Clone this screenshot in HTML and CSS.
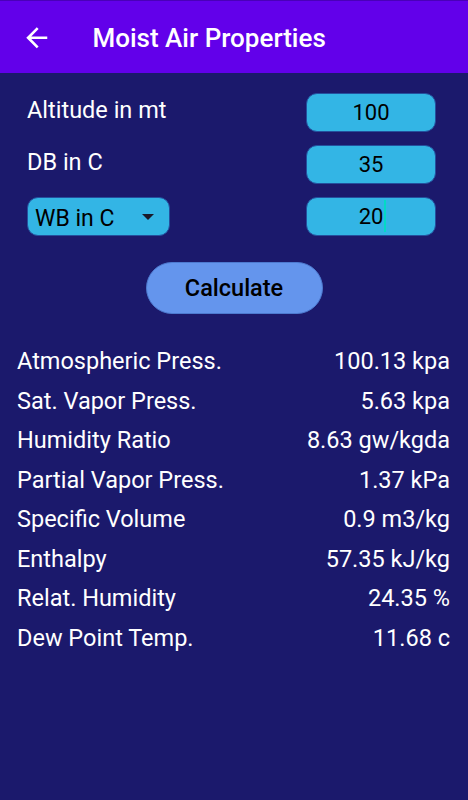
FILE: index.html
```html
<!DOCTYPE html>
<html lang="en">
<head>
  <meta charset="UTF-8">
  <meta name="viewport" content="width=device-width, initial-scale=1.0">
  <title>Moist Air Properties</title>
  <link rel="stylesheet" href="styles.css">
</head>
<body>
  <header class="toolbar">
    <svg class="back" viewBox="0 0 24 24"><path d="M20 11H7.83l5.59-5.59L12 4l-8 8 8 8 1.41-1.41L7.83 13H20v-2z"/></svg>
    <h1 class="title">Moist Air Properties</h1>
  </header>

  <section class="inputs">
    <div class="row">
      <span class="label">Altitude in mt</span>
      <div class="field">100</div>
    </div>
    <div class="row">
      <span class="label">DB in C</span>
      <div class="field">35</div>
    </div>
    <div class="row">
      <div class="spinner">
        <span>WB in C</span>
        <svg class="drop" viewBox="0 0 12 6"><path d="M0 0h12L6 6z"/></svg>
      </div>
      <div class="field"><span class="val">20<span class="caret"></span></span></div>
    </div>
  </section>

  <div class="actions">
    <button class="calc">Calculate</button>
  </div>

  <section class="results">
    <div class="res"><span>Atmospheric Press.</span><span>100.13 kpa</span></div>
    <div class="res"><span>Sat. Vapor Press.</span><span>5.63 kpa</span></div>
    <div class="res"><span>Humidity Ratio</span><span>8.63 gw/kgda</span></div>
    <div class="res"><span>Partial Vapor Press.</span><span>1.37 kPa</span></div>
    <div class="res"><span>Specific Volume</span><span>0.9 m3/kg</span></div>
    <div class="res"><span>Enthalpy</span><span>57.35 kJ/kg</span></div>
    <div class="res"><span>Relat. Humidity</span><span>24.35 %</span></div>
    <div class="res"><span>Dew Point Temp.</span><span>11.68 c</span></div>
  </section>
</body>
</html>
```

FILE: styles.css
```css
body {
  margin: 0;
  height: 800px;
  background-color: #1b196c;
  color: #ffffff;
  font-family: Roboto, "Noto Sans", sans-serif;
}
.toolbar {
  height: 72px;
  border-top: 1px solid #4a00b8;
  background-color: #6200ea;
  display: flex;
  align-items: center;
}
.back {
  width: 31.5px;
  height: 31.5px;
  margin-left: 21px;
  margin-top: 1px;
  fill: #ffffff;
}
.title {
  margin: 2px 0 0 40px;
  font-size: 26px;
  font-weight: 500;
}
.inputs {
  padding: 20px 32px 0 27px;
  display: flex;
  flex-direction: column;
  gap: 13px;
}
.row {
  display: flex;
  align-items: center;
  justify-content: space-between;
  height: 39px;
}
.label {
  font-size: 23.5px;
  margin-bottom: 5px;
}
.field {
  width: 130px;
  height: 39px;
  box-sizing: border-box;
  border: 1px solid #24509e;
  border-radius: 11px;
  background-color: #33b5e5;
  color: #000000;
  font-size: 22px;
  display: flex;
  align-items: center;
  justify-content: center;
}
.val {
  position: relative;
}
.caret {
  position: absolute;
  left: 100%;
  top: -4px;
  width: 2px;
  height: 32px;
  margin-left: 1px;
  background-color: #03dac5;
}
.spinner {
  width: 143px;
  height: 39px;
  box-sizing: border-box;
  border: 1px solid #24509e;
  border-radius: 11px;
  background-color: #33b5e5;
  color: #000000;
  font-size: 23px;
  display: flex;
  align-items: center;
  justify-content: space-between;
  padding: 3px 15px 0 7px;
}
.drop {
  width: 12px;
  height: 6px;
  margin-top: -3px;
  fill: #1a1a2a;
}
.actions {
  display: flex;
  justify-content: center;
  padding-top: 26px;
}
.calc {
  width: 177px;
  height: 52px;
  border: 1px solid #4d7ad0;
  border-radius: 26px;
  background-color: #6495ed;
  color: #000000;
  font-family: Roboto, "Noto Sans", sans-serif;
  font-size: 23.5px;
  font-weight: 500;
  padding: 0;
}
.results {
  padding: 28px 18px 0 17px;
}
.res {
  display: flex;
  justify-content: space-between;
  font-size: 23.5px;
  line-height: 39.5px;
}
```
